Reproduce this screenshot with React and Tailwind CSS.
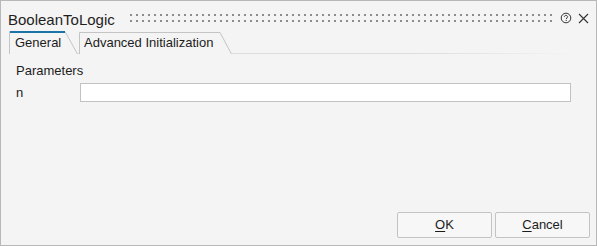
import React from "react";

const HelpIcon = () => (
  <svg width="12" height="12" viewBox="0 0 12 12" fill="none" stroke="#333" strokeWidth="1">
    <circle cx="6" cy="6" r="4.8" />
    <path d="M4.4 4.9 C4.4 3.9 5.1 3.4 6 3.4 C6.9 3.4 7.6 4 7.6 4.8 C7.6 5.8 6.2 5.9 6.2 7.1" />
    <rect x="5.7" y="8" width="1" height="1" fill="#333" stroke="none" />
  </svg>
);

const CloseIcon = () => (
  <svg width="11" height="11" viewBox="0 0 11 11" fill="none" stroke="#333" strokeWidth="1.1">
    <path d="M1 1 L10 10 M10 1 L1 10" />
  </svg>
);

const Grip = () => (
  <svg width="100%" height="8">
    <defs>
      <pattern id="grip" width="6" height="6" patternUnits="userSpaceOnUse">
        <rect x="0" y="0" width="2" height="2" fill="#8c8c8c" />
      </pattern>
    </defs>
    <rect x="0" y="0" width="100%" height="8" fill="url(#grip)" />
  </svg>
);

const Tab = ({ label, active, width, slant }) => (
  <div className="relative h-[23px] shrink-0" style={{ width }}>
    <svg className="absolute inset-0" width={width} height="23">
      <path
        d={`M0.5 23 L0.5 ${active ? 0.5 : 1.5} L${width - slant} ${active ? 0.5 : 1.5} L${width - 0.5} 23`}
        fill="none"
        stroke="#c4c4c4"
        strokeWidth="1"
      />
      {active && <rect x="1" y="0" width={width - slant - 1} height="2" fill="#1b74a8" />}
    </svg>
    <span className={`relative block pt-[4px] leading-[16px] text-[13px] text-[#1c1c1c] ${active ? "pl-[6px]" : "pl-[5px]"}`}>
      {label}
    </span>
  </div>
);

const Button = ({ first, rest }) => (
  <button
    type="button"
    className="w-[95px] h-[26px] rounded-[2px] border border-[#c3c3c3] bg-[#f7f7f7] text-[13px] leading-[16px] text-[#1c1c1c]"
  >
    <span className="underline underline-offset-[2px]">{first}</span>
    {rest}
  </button>
);

export default function App() {
  return (
    <div className="w-[597px] h-[246px] border border-[#b8b8b8] bg-[#f4f4f4] flex flex-col font-['Liberation_Sans',Arial,sans-serif]">
      <div className="flex items-start h-[30px] pt-[10px] pl-[7px]">
        <span className="text-[15px] leading-[17px] text-[#1e1e1e]">BooleanToLogic</span>
        <div className="flex-1 ml-[15px] mt-[3px] h-[8px]">
          <Grip />
        </div>
        <div className="flex items-center gap-[6px] ml-[7px] mr-[7px] mt-[1px]">
          <HelpIcon />
          <CloseIcon />
        </div>
      </div>

      <div className="flex items-end pl-[8px] h-[23px]">
        <Tab label="General" active width={69} slant={13} />
        <div className="w-[1px] h-[23px] border-b border-[#dcdcdc] shrink-0" />
        <Tab label="Advanced Initialization" width={153} slant={12} />
        <div className="flex-1 mr-[18px] h-[1px] bg-gradient-to-r from-[#dcdcdc] via-[#dcdcdc] to-[#f4f4f4]" />
      </div>

      <div className="flex flex-col pt-[9px] pl-[15px] pr-[25px] gap-[4px] text-[13px] leading-[16px] text-[#1c1c1c]">
        <span>Parameters</span>
        <div className="flex items-center">
          <span className="w-[64px] shrink-0">n</span>
          <input className="flex-1 h-[19px] border border-[#c2c2c2] bg-white outline-none" />
        </div>
      </div>

      <div className="mt-auto flex justify-end gap-[3px] pr-[6px] pb-[7px]">
        <Button first="O" rest="K" />
        <Button first="C" rest="ancel" />
      </div>
    </div>
  );
}
